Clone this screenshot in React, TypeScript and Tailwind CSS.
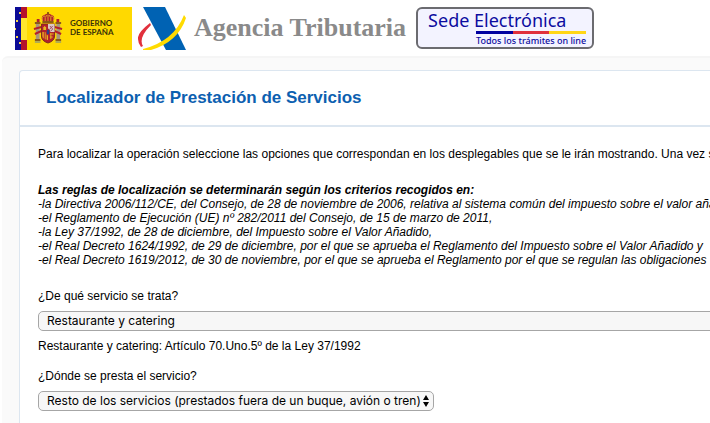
import type { ReactNode } from 'react';

const RULES = [
  '-la Directiva 2006/112/CE, del Consejo, de 28 de noviembre de 2006, relativa al sistema común del impuesto sobre el valor añadido,',
  '-el Reglamento de Ejecución (UE) nº 282/2011 del Consejo, de 15 de marzo de 2011,',
  '-la Ley 37/1992, de 28 de diciembre, del Impuesto sobre el Valor Añadido,',
  '-el Real Decreto 1624/1992, de 29 de diciembre, por el que se aprueba el Reglamento del Impuesto sobre el Valor Añadido y',
  '-el Real Decreto 1619/2012, de 30 de noviembre, por el que se aprueba el Reglamento por el que se regulan las obligaciones',
];

function CoatOfArms() {
  return (
    <svg
      className="ml-1.5 h-8 w-[30px] shrink-0"
      viewBox="0 0 32 32"
      preserveAspectRatio="none"
      aria-hidden="true"
    >
      {/* crown */}
      <path d="M10 9 Q8 4 12 3 Q16 0 20 3 Q24 4 22 9 Z" fill="#b3202c" />
      <path
        d="M10 9 Q9 4 13 4 M22 9 Q23 4 19 4 M16 2 V9 M13 9 Q12 5 15 3 M19 9 Q20 5 17 3"
        fill="none"
        stroke="#e0a526"
        strokeWidth="1"
      />
      <path d="M10 9 H22 V11 H10 Z" fill="#8c5a14" />
      <path d="M16 0 V3 M15 1 H17" stroke="#6d3a12" strokeWidth="1" />
      {/* pillars */}
      <path d="M3 12 H7 V28 H3 Z M25 12 H29 V28 H25 Z" fill="#a8967c" />
      <path
        d="M2 11 H8 M2 28 H8 M24 11 H30 M24 28 H30"
        stroke="#8a5a1c"
        strokeWidth="2"
      />
      <path
        d="M1 17 L9 15 M2 22 L9 19 M31 17 L23 15 M30 22 L23 19"
        stroke="#b3202c"
        strokeWidth="2"
      />
      <path d="M4 7 H7 V10 H4 Z M25 7 H28 V10 H25 Z" fill="#b3202c" />
      <path d="M2 30 H8 M24 30 H30" stroke="#5f7fa8" strokeWidth="1" />
      {/* shield */}
      <path
        d="M9 12 H23 V24 Q23 29 16 31 Q9 29 9 24 Z"
        fill="#b3202c"
        stroke="#7c2a1c"
        strokeWidth="1"
      />
      <path d="M16 12 H23 V20 H16 Z" fill="#dcc9c4" />
      <path d="M18 14 L21 17 L19 19 M21 14 L18 17" stroke="#a04a68" fill="none" />
      <path d="M11 18 V15 H12 V14 H13 V15 H14 V18 Z" fill="#e6b422" />
      <path d="M10 20 H16 V28 Q10 27 10 24 Z" fill="#e6b422" />
      <path d="M12 20 V27 M14 20 V28" stroke="#b3202c" strokeWidth="1" />
      <path
        d="M18 22 H22 M18 25 H21 M19 21 V27"
        stroke="#e6b422"
        strokeWidth="1"
      />
      <ellipse cx="16" cy="20" rx="2" ry="3" fill="#2b3f87" stroke="#b3202c" />
    </svg>
  );
}

function GobiernoLogo() {
  return (
    <a
      href="#gobierno"
      className="flex h-[43px] w-[117px] shrink-0 items-center bg-[#ffd900]"
    >
      <svg className="h-full w-3 shrink-0" viewBox="0 0 12 43" aria-hidden="true">
        <path d="M0 0 H6 V43 H0 Z" fill="#0b0b96" />
        <path d="M6 0 H12 V43 H6 Z" fill="#b5122b" />
        <path d="M6 11 H12 V33 H6 Z" fill="#ffe62e" />
        <path
          d="M4 5 H6 V7 H4 Z M1 13 H3 V15 H1 Z M0 21 H1 V23 H0 Z M1 29 H3 V31 H1 Z M4 35 H6 V37 H4 Z"
          fill="#f5d64a"
        />
      </svg>
      <CoatOfArms />
      <span className="ml-[7px] font-['Lato'] text-[8px] leading-[9px] font-bold whitespace-nowrap text-[#3a3208]">
        <span className="block">GOBIERNO</span>
        <span className="block">DE ESPAÑA</span>
      </span>
    </a>
  );
}

function AgenciaLogo() {
  return (
    <a href="#agencia" className="ml-1.5 flex shrink-0 items-center">
      <svg className="h-11 w-[50px]" viewBox="0 0 50 44" aria-hidden="true">
        <path d="M5 1 H27 L48 44 H28 Z" fill="#0062b3" />
        <path
          d="M12 17 Q-1 27 0 33 Q0 37 3 41 L5 40 Q0 32 13 19 Z"
          fill="#e1303c"
        />
        <path d="M46 9 Q36 35 5 43 V44 H13 Q40 36 48 12 Z" fill="#ffdb00" />
      </svg>
      <span className="ml-1.5 font-['Liberation_Serif'] text-[26px] leading-8 font-bold whitespace-nowrap text-[#8a8a8a]">
        Agencia Tributaria
      </span>
    </a>
  );
}

function SedeBadge() {
  return (
    <a
      href="#sede"
      className="ml-2.5 flex h-[42px] w-[178px] shrink-0 flex-col rounded-md border-2 border-[#6b6b70] bg-[#f3f3ff] pr-1.5 pl-2.5 font-['Noto_Sans'] whitespace-nowrap text-[#0c0ca0]"
    >
      <span className="text-[18px] leading-[22px]">Sede Electrónica</span>
      <span className="ml-12 flex h-[3px] shrink-0">
        <span className="flex-1 bg-[#0000a0]" />
        <span className="flex-1 bg-[#e0303c]" />
        <span className="flex-1 bg-[#ffd616]" />
      </span>
      <span className="ml-12 text-[9px] leading-[13px] font-medium">
        Todos los trámites on line
      </span>
    </a>
  );
}

interface SelectFieldProps {
  id: string;
  label: string;
  option: string;
  wide?: boolean;
  children?: ReactNode;
}

function SelectField({ id, label, option, wide, children }: SelectFieldProps) {
  return (
    <div className="mb-4">
      <label htmlFor={id} className="block">
        {label}
      </label>
      <div className={wide ? 'relative mt-2' : 'relative mt-2 w-fit'}>
        <select
          id={id}
          className={`block h-5 appearance-none rounded-[5px] border border-[#a6a6a6] bg-[#f7f7f7] pr-3 pl-2 font-['Inter'] text-[12px] leading-4 ${
            wide ? 'w-full' : ''
          }`}
        >
          <option>{option}</option>
        </select>
        <svg
          className="pointer-events-none absolute top-1 right-1 h-3 w-2"
          viewBox="0 0 8 12"
          aria-hidden="true"
        >
          <path d="M4 0 L7 5 H1 Z M1 7 H7 L4 12 Z" fill="#000" />
        </svg>
      </div>
      {children}
    </div>
  );
}

export default function App() {
  return (
    <div className="min-h-screen overflow-hidden bg-white font-['Liberation_Sans'] text-[12px] leading-[14px] text-black">
      <header className="flex h-14 items-center pl-[15px]">
        <GobiernoLogo />
        <AgenciaLogo />
        <SedeBadge />
      </header>
      <main className="ml-0.5 min-h-[367px] min-w-[960px] rounded-tl-md border-t-2 border-[#f5f5f5] bg-[#fafafa] pt-3 pr-4 pl-[17px]">
        <section className="min-h-[353px] rounded-t border border-b-0 border-[#dce6f0] bg-white">
          <h1 className="border-b-2 border-[#dce6f0] px-[26px] pt-4 pb-4 text-[17px] leading-[22px] font-bold text-[#0c60b0]">
            Localizador de Prestación de Servicios
          </h1>
          <div className="px-[18px] pt-5 whitespace-nowrap">
            <p>
              Para localizar la operación seleccione las opciones que
              correspondan en los desplegables que se le irán mostrando. Una vez
              seleccionadas
            </p>
            <div className="my-[22px] italic">
              <p className="font-bold">
                Las reglas de localización se determinarán según los criterios
                recogidos en:
              </p>
              {RULES.map((rule) => (
                <p key={rule}>{rule}</p>
              ))}
            </div>
            <form>
              <SelectField
                id="servicio"
                label="¿De qué servicio se trata?"
                option="Restaurante y catering"
                wide
              >
                <p className="mt-2">
                  Restaurante y catering: Artículo 70.Uno.5º de la Ley 37/1992
                </p>
              </SelectField>
              <SelectField
                id="lugar"
                label="¿Dónde se presta el servicio?"
                option="Resto de los servicios (prestados fuera de un buque, avión o tren)"
              />
            </form>
          </div>
        </section>
      </main>
    </div>
  );
}
